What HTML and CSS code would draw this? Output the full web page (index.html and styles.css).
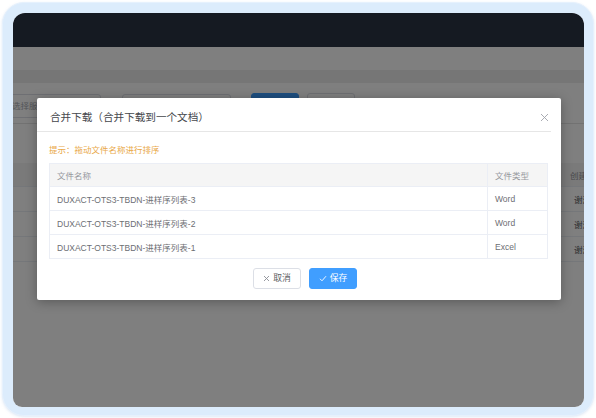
FILE: index.html
```html
<!DOCTYPE html>
<html lang="zh-CN">
<head>
<meta charset="utf-8">
<title>合并下载</title>
<link rel="stylesheet" href="styles.css">
</head>
<body>
<div class="frame">
  <div class="screen">
    <div class="topbar"></div>
    <div class="app">
      <div class="app-header"></div>
      <div class="tabs"></div>
      <div class="filters">
        <div class="input input-a">选择服务器</div>
        <div class="input input-b"></div>
        <div class="bg-btn bg-primary"></div>
        <div class="bg-btn"></div>
      </div>
      <div class="bg-table">
        <div class="bg-row bg-head"><span></span><span class="bg-cell">创建人</span></div>
        <div class="bg-row"><span></span><span class="bg-cell center">谢清</span></div>
        <div class="bg-row"><span></span><span class="bg-cell center">谢清</span></div>
        <div class="bg-row"><span></span><span class="bg-cell center">谢清</span></div>
      </div>
      <div class="mask"></div>
      <div class="modal">
        <div class="modal-header">
          <span class="modal-title">合并下载（合并下载到一个文档）</span>
        </div>
        <button class="modal-close" type="button" aria-label="关闭">
          <svg width="9" height="9" viewBox="0 0 9 9"><path d="M1 1L8 8M8 1L1 8" stroke="#a0a3aa" stroke-width="0.9" fill="none"/></svg>
        </button>
        <div class="modal-body">
          <div class="tip">提示：拖动文件名称进行排序</div>
          <div class="file-table">
            <div class="ft-row ft-head"><div class="ft-name">文件名称</div><div class="ft-type">文件类型</div></div>
            <div class="ft-row"><div class="ft-name">DUXACT-OTS3-TBDN-进样序列表-3</div><div class="ft-type">Word</div></div>
            <div class="ft-row"><div class="ft-name">DUXACT-OTS3-TBDN-进样序列表-2</div><div class="ft-type">Word</div></div>
            <div class="ft-row"><div class="ft-name">DUXACT-OTS3-TBDN-进样序列表-1</div><div class="ft-type">Excel</div></div>
          </div>
        </div>
        <div class="modal-footer">
          <button class="btn btn-default" type="button">
            <svg width="7" height="7" viewBox="0 0 7 7"><path d="M1 1L6 6M6 1L1 6" stroke="#8c8f96" stroke-width="0.9" fill="none"/></svg>
            <span>取消</span>
          </button>
          <button class="btn btn-primary" type="button">
            <svg width="8" height="7" viewBox="0 0 8 7"><path d="M1 3.8L3 5.8L7 1.2" stroke="#ffffff" stroke-width="0.9" fill="none"/></svg>
            <span>保存</span>
          </button>
        </div>
      </div>
    </div>
  </div>
</div>
</body>
</html>
```

FILE: styles.css
```css
* { box-sizing: border-box; }

html, body {
  margin: 0;
  padding: 0;
  background: #ffffff;
  font-family: "Liberation Sans", "Noto Sans CJK SC", sans-serif;
}

.frame {
  margin: 2px;
  width: 592px;
  height: 414px;
  padding: 10px;
  border-radius: 22px;
  background: #dcecfc;
  border: 1px solid #e6f1fd;
  box-shadow: 0 1px 3px rgba(160, 190, 225, 0.35);
}

.screen {
  width: 571px;
  height: 394px;
  border-radius: 12px 12px 9px 9px;
  overflow: hidden;
  display: flex;
  flex-direction: column;
  background: #ffffff;
}

.topbar {
  height: 34px;
  flex: none;
  background: #151a22;
}

.app {
  position: relative;
  flex: 1;
  background: #ffffff;
  overflow: hidden;
}

.app-header {
  height: 23px;
  background: #ffffff;
}

.tabs {
  height: 13px;
  background: #ececec;
}

.filters {
  height: 41px;
  display: flex;
  align-items: flex-start;
  padding-top: 11px;
  border-bottom: 1px solid #e4e4e4;
}

.input {
  height: 24px;
  border: 1px solid #dcdfe6;
  border-radius: 3px;
  background: #ffffff;
  font-size: 8.5px;
  line-height: 22px;
  color: #a8abb2;
}

.input-a {
  width: 100px;
  margin-left: -12px;
  padding-left: 10px;
}

.input-b {
  width: 109px;
  margin-left: 21px;
}

.bg-btn {
  width: 48px;
  height: 24px;
  margin-top: -1px;
  margin-left: 8px;
  border: 1px solid #dcdfe6;
  border-radius: 3px;
  background: #ffffff;
}

.bg-primary {
  margin-left: 20px;
  background: #3c9cfe;
  border-color: #3c9cfe;
}

.bg-table {
  margin-top: 39px;
  font-size: 8.5px;
  color: #606266;
}

.bg-row {
  display: grid;
  grid-template-columns: 1fr 18px;
  height: 25px;
  border-bottom: 1px solid #ebeef5;
  align-items: center;
}

.bg-head {
  height: 24px;
  background: #f4f4f4;
  color: #909399;
}

.bg-cell {
  padding-left: 4px;
  white-space: nowrap;
}

.bg-cell.center {
  padding-left: 8px;
}

.mask {
  position: absolute;
  inset: 0;
  background: rgba(0, 0, 0, 0.5);
}

.modal {
  position: absolute;
  top: 51px;
  left: 24px;
  width: 524px;
  height: 202px;
  background: #ffffff;
  border-radius: 2px;
  box-shadow: 0 2px 12px rgba(0, 0, 0, 0.3);
  display: flex;
  flex-direction: column;
}

.modal-header {
  height: 34px;
  padding: 5px 0 0 13px;
  margin-right: 10px;
  border-bottom: 1px solid #e6e6e6;
  display: flex;
  align-items: center;
}

.modal-title {
  font-size: 10.6px;
  color: #45474c;
  line-height: 14px;
}

.modal-close {
  position: absolute;
  top: 15px;
  right: 12px;
  width: 9px;
  height: 9px;
  padding: 0;
  border: 0;
  background: transparent;
  display: flex;
}

.modal-body {
  padding: 12px 13px 0 12px;
}

.tip {
  font-size: 8.5px;
  line-height: 12px;
  color: #e9a849;
}

.file-table {
  margin-top: 7px;
  border: 1px solid #ebeef5;
  border-bottom: 0;
  font-size: 8.5px;
  color: #6c6e73;
}

.ft-row {
  display: grid;
  grid-template-columns: 437px 1fr;
  height: 24px;
  border-bottom: 1px solid #ebeef5;
}

.ft-head {
  height: 23px;
  background: #f5f5f5;
  color: #96989d;
}

.ft-name,
.ft-type {
  display: flex;
  align-items: center;
  padding-left: 7px;
  white-space: nowrap;
}

.ft-type {
  border-left: 1px solid #ebeef5;
}

.modal-footer {
  display: flex;
  justify-content: center;
  gap: 8px;
  padding: 9px 0 0 12px;
}

.btn {
  width: 48px;
  height: 21px;
  border-radius: 3px;
  font-family: inherit;
  font-size: 8.8px;
  display: flex;
  align-items: center;
  justify-content: center;
  gap: 3px;
  padding: 0;
  line-height: 1;
}

.btn-default {
  border: 1px solid #dcdfe6;
  background: #ffffff;
  color: #606266;
}

.btn-primary {
  border: 1px solid #409eff;
  background: #409eff;
  color: #ffffff;
}
```
